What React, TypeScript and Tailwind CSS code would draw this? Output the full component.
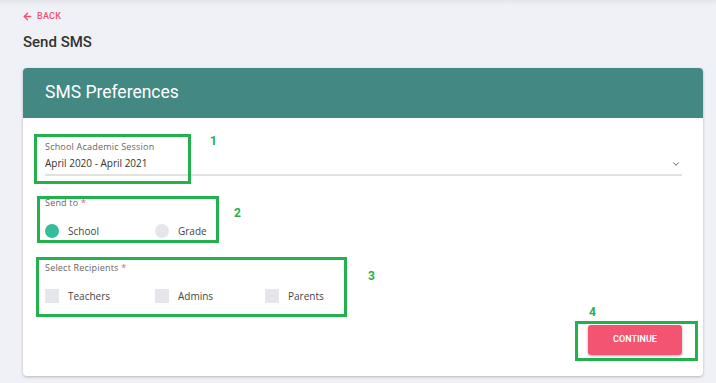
import { ArrowLeft, ChevronDown } from 'lucide-react';

const formFont = { fontFamily: '"Open Sans", "Liberation Sans", sans-serif' };

function Note({ n, className }: { n: string; className: string }) {
  return (
    <span className={`absolute text-[12px] leading-[14px] font-bold text-[#22b14c] ${className}`} style={{ fontFamily: 'Roboto, sans-serif' }}>
      {n}
    </span>
  );
}

function Frame({ className }: { className: string }) {
  return <div className={`absolute border-[3px] border-[#22b14c] pointer-events-none ${className}`} />;
}

export default function App() {
  const recipients = [
    { label: 'Teachers', w: 'w-[110px]' },
    { label: 'Admins', w: 'w-[110px]' },
    { label: 'Parents', w: 'w-auto' },
  ];

  return (
    <div className="relative w-[716px] h-[383px] bg-[#f0f1f6] overflow-hidden" style={{ fontFamily: 'Roboto, sans-serif' }}>
      <div className="absolute top-0 left-0 right-0 h-[6px] bg-gradient-to-b from-[#e4e5ea] to-transparent" />

      <div className="pl-[22px] pt-[10px]">
        <button className="flex items-center gap-[4px] text-[#f0506e] text-[9px] font-medium tracking-wide h-[13px]">
          <ArrowLeft className="w-[11px] h-[11px]" strokeWidth={3} />
          BACK
        </button>
        <h1 className="mt-[10px] pl-[1px] text-[15px] font-medium text-[#333] leading-[18px]">Send SMS</h1>
      </div>

      <div className="ml-[23px] mt-[17px] w-[680px] h-[308px] bg-white rounded-[4px] shadow-[0_1px_3px_rgba(0,0,0,0.25)] overflow-hidden">
        <div className="h-[50px] bg-[#438882] flex items-center pl-[22px]">
          <h2 className="text-white text-[17.5px] leading-none">SMS Preferences</h2>
        </div>

        <div className="relative pl-[22px] pr-[21px] pt-[23px]" style={formFont}>
          <div className="text-[9px] tracking-[0.2px] text-[#666] leading-[12px]">School Academic Session</div>
          <div className="flex items-center justify-between border-b-2 border-[#e2e2e2] h-[23px]">
            <span className="text-[10px] text-[#333]">April 2020 - April 2021</span>
            <ChevronDown className="w-[10px] h-[10px] text-[#444] mr-[1px]" strokeWidth={2} />
          </div>

          <div className="mt-[21px] text-[9px] tracking-[0.2px] text-[#666] leading-[12px]">
            Send to <span className="text-[#f0506e]">*</span>
          </div>
          <div className="mt-[15px] flex items-center text-[10px] text-[#444] h-[14px]">
            <div className="flex items-center w-[110px]">
              <span className="w-[14px] h-[14px] rounded-full bg-[#38bd9c] mr-[9px]" />
              School
            </div>
            <div className="flex items-center">
              <span className="w-[14px] h-[14px] rounded-full bg-[#e4e6ec] mr-[9px]" />
              Grade
            </div>
          </div>

          <div className="mt-[24px] text-[9px] tracking-[0.2px] text-[#666] leading-[12px]">
            Select Recipients <span className="text-[#f0506e]">*</span>
          </div>
          <div className="mt-[15px] flex items-center text-[10px] text-[#444] h-[14px]">
            {recipients.map((r) => (
              <div key={r.label} className={`flex items-center ${r.w}`}>
                <span className="w-[14px] h-[14px] bg-[#e4e6ec] mr-[9px]" />
                {r.label}
              </div>
            ))}
          </div>

          <div className="flex justify-end mt-[22px]">
            <button className="w-[94px] h-[30px] rounded-[3px] bg-[#f25471] text-white text-[9px] font-semibold shadow-[0_1px_3px_rgba(0,0,0,0.3)]" style={{ fontFamily: 'Roboto, sans-serif' }}>
              CONTINUE
            </button>
          </div>
        </div>
      </div>

      <Frame className="left-[34px] top-[134px] w-[157px] h-[50px]" />
      <Note n="1" className="left-[210px] top-[134px]" />
      <Frame className="left-[37px] top-[196px] w-[182px] h-[47px]" />
      <Note n="2" className="left-[234px] top-[206px]" />
      <Frame className="left-[36px] top-[257px] w-[311px] h-[60px]" />
      <Note n="3" className="left-[368px] top-[269px]" />
      <Frame className="left-[575px] top-[321px] w-[123px] h-[40px]" />
      <Note n="4" className="left-[589px] top-[305px]" />
    </div>
  );
}
